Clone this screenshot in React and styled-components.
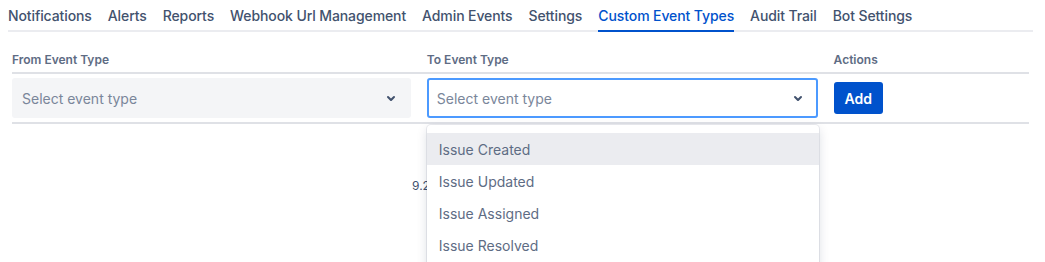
import React from "react";
import styled, { createGlobalStyle } from "styled-components";

const Global = createGlobalStyle`
  html, body { margin: 0; padding: 0; background: #fff; }
  body { font-family: Inter, "Noto Sans", "Liberation Sans", sans-serif; color: #172b4d; -webkit-font-smoothing: antialiased; }
  * { box-sizing: border-box; }
`;

const Page = styled.div`
  min-height: 262px;
  padding: 0 12px 0 8px;
`;

const TabList = styled.div`
  display: flex;
  border-bottom: 2px solid #ebecf0;
`;

const Tab = styled.div`
  position: relative;
  padding: 4px 8px 2px;
  line-height: 24px;
  font-size: 14px;
  font-weight: 500;
  letter-spacing: -0.1px;
  color: ${(p) => (p.$active ? "#0052cc" : "#42526e")};
  white-space: nowrap;
  &:first-child { padding-left: 0; }
  ${(p) =>
    p.$active &&
    `
    &::after {
      content: "";
      position: absolute;
      left: 8px;
      right: 8px;
      bottom: -2px;
      height: 2px;
      background: #0052cc;
    }
  `}
`;

const TableWrap = styled.div`
  padding: 16px 4px 0;
`;

const Grid = styled.div`
  display: grid;
  grid-template-columns: 40% 40% 20%;
  & > *:nth-child(3n + 1) { padding-left: 0; }
  & > *:nth-child(3n) { padding-right: 0; }
`;

const HeadCell = styled.div`
  padding: 4px 8px;
  font-size: 12px;
  line-height: 16px;
  font-weight: 600;
  color: #5e6c84;
  border-bottom: 2px solid #dfe1e6;
`;

const BodyCell = styled.div`
  position: relative;
  padding: 4px 8px;
  display: flex;
  align-items: center;
  border-bottom: 2px solid #dfe1e6;
`;

const SelectBox = styled.div`
  position: relative;
  flex: 1;
  height: 40px;
  display: flex;
  align-items: center;
  padding: 0 6px 0 8px;
  border-radius: 3px;
  border: 2px solid ${(p) => (p.$focused ? "#4c9aff" : "#f4f5f7")};
  background: ${(p) => (p.$focused ? "#ffffff" : "#f4f5f7")};
`;

const Placeholder = styled.span`
  flex: 1;
  font-size: 14px;
  color: #7a869a;
`;

const Chevron = styled.svg`
  width: 24px;
  height: 24px;
  flex: none;
  color: #42526e;
`;

const Menu = styled.div`
  position: absolute;
  top: calc(100% + 9px);
  left: -2px;
  right: -3px;
  background: #fff;
  border-radius: 4px;
  padding: 8px 0;
  box-shadow: 0 0 0 1px rgba(9, 30, 66, 0.08), 0 4px 11px rgba(9, 30, 66, 0.15);
  z-index: 10;
`;

const Option = styled.div`
  height: 32px;
  display: flex;
  align-items: center;
  padding: 0 12px;
  font-size: 14px;
  color: #5e6c84;
  background: ${(p) => (p.$highlighted ? "#ebecf0" : "transparent")};
`;

const AddButton = styled.button`
  height: 32px;
  padding: 0 11px;
  border: none;
  border-radius: 3px;
  background: #0052cc;
  color: #fff;
  font-family: inherit;
  font-size: 14px;
  font-weight: 600;
  cursor: pointer;
`;

const Footer = styled.div`
  margin-top: 54px;
  padding-left: 404px;
  font-size: 12px;
  line-height: 16px;
  color: #42526e;
`;

const ChevronIcon = () => (
  <Chevron viewBox="0 0 24 24">
    <path
      fill="currentColor"
      d="M8.292 10.293a1.009 1.009 0 0 0 0 1.419l2.939 2.965c.218.215.5.322.779.322s.556-.107.769-.322l2.93-2.955a1.01 1.01 0 0 0 0-1.419.987.987 0 0 0-1.406 0l-2.298 2.317-2.307-2.327a.99.99 0 0 0-1.406 0z"
    />
  </Chevron>
);

const tabs = [
  "Notifications",
  "Alerts",
  "Reports",
  "Webhook Url Management",
  "Admin Events",
  "Settings",
  "Custom Event Types",
  "Audit Trail",
  "Bot Settings",
];

const options = ["Issue Created", "Issue Updated", "Issue Assigned", "Issue Resolved"];

export default function App() {
  return (
    <Page>
      <Global />
      <TabList>
        {tabs.map((t) => (
          <Tab key={t} $active={t === "Custom Event Types"}>
            {t}
          </Tab>
        ))}
      </TabList>
      <TableWrap>
        <Grid>
          <HeadCell>From Event Type</HeadCell>
          <HeadCell>To Event Type</HeadCell>
          <HeadCell>Actions</HeadCell>
          <BodyCell>
            <SelectBox>
              <Placeholder>Select event type</Placeholder>
              <ChevronIcon />
            </SelectBox>
          </BodyCell>
          <BodyCell>
            <SelectBox $focused>
              <Placeholder>Select event type</Placeholder>
              <ChevronIcon />
              <Menu>
                {options.map((o, i) => (
                  <Option key={o} $highlighted={i === 0}>
                    {o}
                  </Option>
                ))}
              </Menu>
            </SelectBox>
          </BodyCell>
          <BodyCell>
            <AddButton>Add</AddButton>
          </BodyCell>
        </Grid>
      </TableWrap>
      <Footer>9.2.0</Footer>
    </Page>
  );
}
